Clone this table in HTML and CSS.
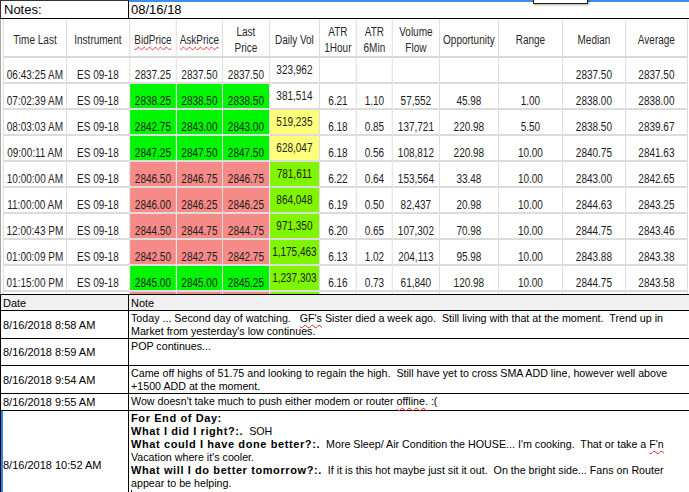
FILE: index.html
```html
<!DOCTYPE html>
<html>
<head>
<meta charset="utf-8">
<link rel="stylesheet" href="styles.css">
</head>
<body>
<div class="page">
  <div class="topbar">
    <div class="label">Notes:</div>
    <div class="datefield">08/16/18</div>
    <div class="tip"></div>
  </div>
  <div class="gridwrap">
    <table class="grid">
      <colgroup>
        <col class="c63"><col class="c63"><col class="c47"><col class="c46"><col class="c47"><col class="c50"><col class="c37"><col class="c36"><col class="c47"><col class="c59"><col class="c64"><col class="c63"><col class="c62">
      </colgroup>
      <thead>
        <tr>
          <th>Time Last</th><th>Instrument</th><th><span class="spell">BidPrice</span></th><th><span class="spell">AskPrice</span></th><th>Last<br>Price</th><th>Daily Vol</th><th>ATR<br>1Hour</th><th>ATR<br>6Min</th><th>Volume<br>Flow</th><th>Opportunity</th><th>Range</th><th>Median</th><th>Average</th>
        </tr>
      </thead>
      <tbody>
        <tr><td>06:43:25 AM</td><td>ES 09-18</td><td>2837.25</td><td>2837.50</td><td>2837.50</td><td class="vol">323,962</td><td></td><td></td><td></td><td></td><td></td><td>2837.50</td><td>2837.50</td></tr>
        <tr><td>07:02:39 AM</td><td>ES 09-18</td><td class="up">2838.25</td><td class="up">2838.50</td><td class="up">2838.50</td><td class="vol">381,514</td><td>6.21</td><td>1.10</td><td>57,552</td><td>45.98</td><td>1.00</td><td>2838.00</td><td>2838.00</td></tr>
        <tr><td>08:03:03 AM</td><td>ES 09-18</td><td class="up">2842.75</td><td class="up">2843.00</td><td class="up">2843.00</td><td class="vol mid">519,235</td><td>6.18</td><td>0.85</td><td>137,721</td><td>220.98</td><td>5.50</td><td>2838.50</td><td>2839.67</td></tr>
        <tr><td>09:00:11 AM</td><td>ES 09-18</td><td class="up">2847.25</td><td class="up">2847.50</td><td class="up">2847.50</td><td class="vol mid">628,047</td><td>6.18</td><td>0.56</td><td>108,812</td><td>220.98</td><td>10.00</td><td>2840.75</td><td>2841.63</td></tr>
        <tr><td>10:00:00 AM</td><td>ES 09-18</td><td class="down">2846.50</td><td class="down">2846.75</td><td class="down">2846.75</td><td class="vol high">781,611</td><td>6.22</td><td>0.64</td><td>153,564</td><td>33.48</td><td>10.00</td><td>2843.00</td><td>2842.65</td></tr>
        <tr><td>11:00:00 AM</td><td>ES 09-18</td><td class="down">2846.00</td><td class="down">2846.25</td><td class="down">2846.25</td><td class="vol high">864,048</td><td>6.19</td><td>0.50</td><td>82,437</td><td>20.98</td><td>10.00</td><td>2844.63</td><td>2843.25</td></tr>
        <tr><td>12:00:43 PM</td><td>ES 09-18</td><td class="down">2844.50</td><td class="down">2844.75</td><td class="down">2844.75</td><td class="vol high">971,350</td><td>6.20</td><td>0.65</td><td>107,302</td><td>70.98</td><td>10.00</td><td>2844.75</td><td>2843.46</td></tr>
        <tr><td>01:00:09 PM</td><td>ES 09-18</td><td class="down">2842.50</td><td class="down">2842.75</td><td class="down">2842.75</td><td class="vol high">1,175,463</td><td>6.13</td><td>1.02</td><td>204,113</td><td>95.98</td><td>10.00</td><td>2843.88</td><td>2843.38</td></tr>
        <tr><td>01:15:00 PM</td><td>ES 09-18</td><td class="up">2845.00</td><td class="up">2845.00</td><td class="up">2845.25</td><td class="vol high">1,237,303</td><td>6.16</td><td>0.73</td><td>61,840</td><td>120.98</td><td>10.00</td><td>2844.75</td><td>2843.58</td></tr>
        <tr class="peek"><td></td><td></td><td class="down"></td><td class="down"></td><td class="down"></td><td class="vol high"></td><td></td><td></td><td></td><td></td><td></td><td></td><td></td></tr>
      </tbody>
    </table>
  </div>
  <table class="notes">
    <colgroup><col class="ndate"><col></colgroup>
    <thead>
      <tr><th>Date</th><th>Note</th></tr>
    </thead>
    <tbody>
      <tr class="r27"><td class="d">8/16/2018 8:58 AM</td><td class="n">Today ... Second day of watching.   <span class="spell">GF's</span> Sister died a week ago.  Still living with that at the moment.  Trend up in<br>Market from yesterday's low continues.</td></tr>
      <tr class="r27"><td class="d">8/16/2018 8:59 AM</td><td class="n">POP continues...</td></tr>
      <tr class="r27"><td class="d">8/16/2018 9:54 AM</td><td class="n">Came off highs of 51.75 and looking to regain the high.  Still have yet to cross SMA ADD line, however well above<br>+1500 ADD at the moment.</td></tr>
      <tr class="r17"><td class="d">8/16/2018 9:55 AM</td><td class="n">Wow doesn't take much to push either modem or router <span class="spell">offline.</span> :(</td></tr>
      <tr class="rlast"><td class="d sel">8/16/2018 10:52 AM</td><td class="n"><b>For End of Day:</b><br><b>What I did I right?:.</b>  SOH<br><b>What could I have done better?:.</b>  More Sleep/ Air Condition the HOUSE... I'm cooking.  That or take a <span class="spell">F'n</span><br>Vacation where it's cooler.<br><b>What will I do better tomorrow?:.</b>  If it is this hot maybe just sit it out.  On the bright side... Fans on Router<br>appear to be helping.<br><span class="caret"></span></td></tr>
    </tbody>
  </table>
</div>
</body>
</html>
```

FILE: styles.css
```css
html, body {
  margin: 0;
  padding: 0;
  background: #ffffff;
}
.page {
  width: 689px;
  height: 492px;
  overflow: hidden;
  font-family: "Liberation Sans", Arial, sans-serif;
  color: #000;
}
.topbar {
  position: relative;
  display: flex;
  height: 18px;
  border-bottom: 1px solid #000;
}
.label {
  width: 124px;
  padding-left: 3px;
  border-top: 1px solid #333;
  border-left: 1px solid #333;
  border-right: 1px solid #000;
  font-size: 13px;
  line-height: 17px;
}
.datefield {
  flex: 1;
  padding-left: 2px;
  border-top: 2px solid #3a8fe8;
  font-size: 13px;
  line-height: 16px;
}
.tip {
  position: absolute;
  left: 533px;
  top: -10px;
  width: 53px;
  height: 12px;
  background: #fff;
  border: 1px solid #222;
  box-shadow: 1px 1px 2px rgba(0,0,0,0.35);
}
.gridwrap {
  height: 275px;
  overflow: hidden;
  border-left: 1px solid #a8a8a8;
  padding-left: 2px;
}
/* the grid uses a condensed face: drawn at full width, then narrowed */
.grid {
  border-collapse: collapse;
  table-layout: fixed;
  width: 856px;
  transform: scaleX(0.8);
  transform-origin: 0 0;
  font-family: "Liberation Sans", Arial, sans-serif;
  font-size: 12.5px;
  color: #1e1e1e;
}
.c63 { width: 78.75px; }
.c62 { width: 77.5px; }
.c47 { width: 58.75px; }
.c46 { width: 57.5px; }
.c50 { width: 62.5px; }
.c37 { width: 46.25px; }
.c36 { width: 45px; }
.c59 { width: 73.75px; }
.c64 { width: 80px; }
.grid th {
  height: 33px;
  padding: 4px 0 0 0;
  font-weight: normal;
  line-height: 16px;
  vertical-align: middle;
  text-align: center;
  border-left: 1px solid #d6d6d6;
  border-right: 1px solid #d6d6d6;
  border-bottom: 2px solid #d8d8d8;
  color: #2a2a2a;
}
.grid td {
  height: 24px;
  padding: 0;
  line-height: 14px;
  vertical-align: bottom;
  text-align: center;
  white-space: nowrap;
  overflow: hidden;
  border-left: 1px solid #d6d6d6;
  border-right: 1px solid #d6d6d6;
  border-bottom: 2px solid #dcdcdc;
}
.grid td.vol {
  vertical-align: middle;
  padding: 0 0 1px 0;
  height: 23px;
}
.up { background: #00f500; }
.down { background: #f58a86; }
.mid { background: #ffff7a; }
.high { background: #7ff500; }
.spell {
  text-decoration: underline wavy #e02020;
  text-decoration-thickness: 1px;
  text-underline-offset: 2px;
}
.notes {
  width: 689px;
  border-collapse: collapse;
  table-layout: fixed;
  font-size: 10.7px;
  border-top: 1px solid #000;
}
.ndate { width: 128px; }
.notes th {
  height: 15px;
  padding: 0 2px;
  font-weight: normal;
  font-size: 11px;
  text-align: left;
  background: #f0f0f0;
  border-left: 1px solid #000;
  border-bottom: 1px solid #000;
  line-height: 14px;
}
.notes td {
  border-left: 1px solid #000;
  border-bottom: 1px solid #000;
  padding: 0 2px;
}
.notes td.d {
  vertical-align: middle;
  white-space: nowrap;
  font-size: 11px;
}
.notes td.n {
  vertical-align: top;
  white-space: pre;
  line-height: 13px;
  padding-top: 1px;
}
.notes td.n b {
  font-size: 11px;
  letter-spacing: 0.6px;
}
.r27 { height: 27px; }
.r17 { height: 17px; }
.rlast { height: 108px; }
.sel {
  box-shadow: inset 2px 0 0 #2b8be8;
}
.caret {
  display: inline-block;
  width: 1px;
  height: 12px;
  background: #000;
  vertical-align: top;
}
```
